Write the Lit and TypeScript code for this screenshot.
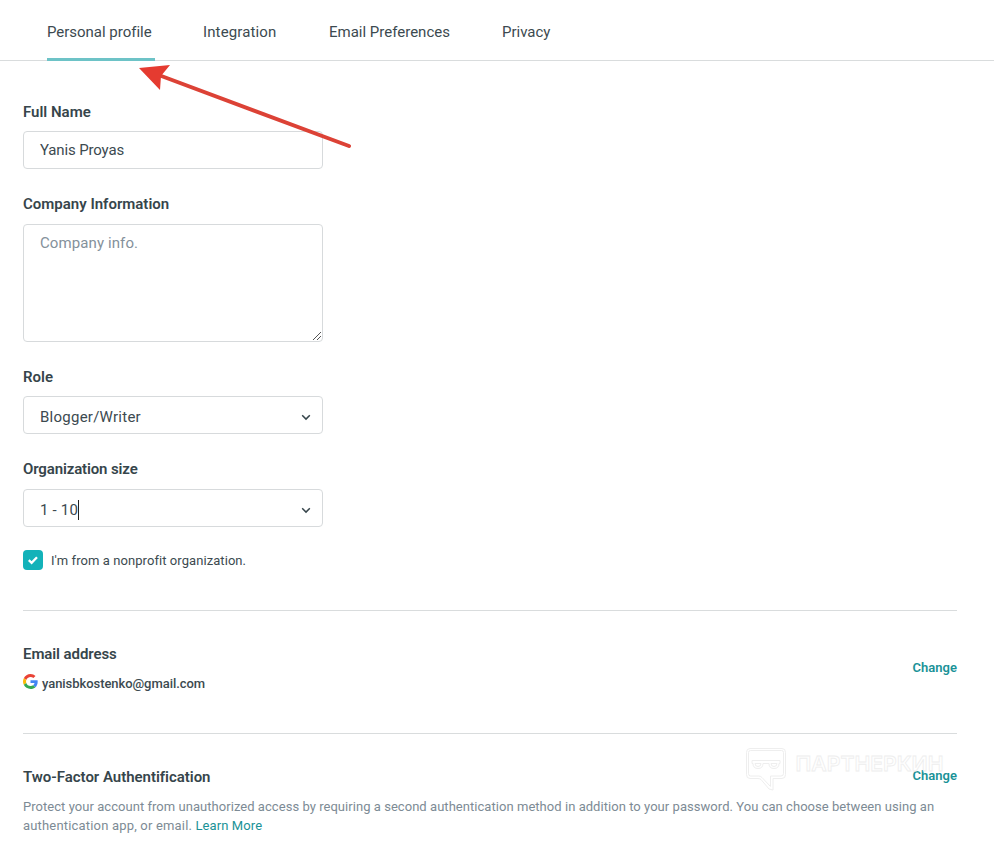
import { LitElement, html, css, svg } from "lit";
import { customElement } from "lit/decorators.js";

const chevron = svg`<path d="M1.2 1.3 5 5.1 8.8 1.3" fill="none" stroke="#36454b" stroke-width="1.5"/>`;

@customElement("app-root")
export class AppRoot extends LitElement {
  static styles = css`
    :host { display: block; position: relative; height: 841px; overflow: hidden; background: #fff; color: #3c4a50; font-family: Roboto, "Liberation Sans", sans-serif; font-size: 15px; }
    * { box-sizing: border-box; }
    .tabs { display: flex; gap: 48px; height: 61px; padding-left: 47px; border-bottom: 1px solid #d9dcdd; }
    .tab { height: 61px; line-height: 64px; white-space: nowrap; border-bottom: 3px solid transparent; }
    .tab.active { border-color: #6dc3c7; }
    .personal { width: 108px; letter-spacing: -0.02px; }
    .integration { width: 78px; letter-spacing: 0.13px; }
    .preferences { width: 125px; }
    .content { width: 957px; padding: 41px 0 0 23px; }
    .field { width: 300px; margin-bottom: 25px; display: flex; flex-direction: column; gap: 9px; }
    .field.loose { gap: 10px; }
    .field.last { margin-bottom: 23px; }
    .label { height: 20px; line-height: 20px; font-weight: 600; white-space: nowrap; color: #36454b; }
    .label.size { letter-spacing: -0.13px; }
    .label.address-title { letter-spacing: -0.08px; }
    .label.two { letter-spacing: -0.03px; }
    .box { height: 38px; border: 1px solid #d7dadc; border-radius: 4px; padding: 0 11px 0 16px; display: flex; align-items: center; white-space: nowrap; }
    .name { letter-spacing: -0.14px; }
    .area { height: 118px; align-items: flex-end; padding: 0 0 0 16px; }
    .hint { align-self: flex-start; flex: 1; line-height: 36px; color: #84919b; letter-spacing: 0.1px; }
    .value { flex: 1; display: flex; align-items: center; }
    .role { letter-spacing: 0.25px; }
    .count { letter-spacing: 0.2px; }
    .select { padding-top: 4px; }
    .caret { width: 1px; height: 20px; background: #222; }
    .check { display: flex; align-items: center; gap: 8px; height: 20px; font-size: 13px; letter-spacing: 0.07px; }
    .tick { width: 20px; height: 20px; border-radius: 4px; background: #13b2b9; }
    .rule { height: 1px; background: #d9dcdd; }
    .check + .rule { margin-top: 40px; }
    .row { display: flex; justify-content: space-between; }
    .email { height: 122px; padding-top: 33px; }
    .mail { display: flex; align-items: center; gap: 4px; height: 20px; margin-top: 9px; font-size: 13px; font-weight: 500; letter-spacing: -0.06px; }
    .google { width: 15px; height: 15px; margin-top: -3px; }
    .change { font-size: 13px; font-weight: 600; line-height: 20px; color: #1a9297; margin-top: 14px; }
    .factor { padding-top: 33px; }
    .factor .change { margin-top: -1px; }
    .text { margin-top: 10px; font-size: 13px; line-height: 19px; color: #7d8b95; white-space: nowrap; }
    .first { letter-spacing: 0.045px; }
    .second { letter-spacing: 0.18px; }
    .link { color: #1a9297; letter-spacing: 0.1px; }
    .overlay { position: absolute; left: 0; top: 0; pointer-events: none; }
    .brand { font: 600 20.5px "Inter", sans-serif; }
  `;

  render() {
    return html`
      <nav class="tabs">
        <div class="tab active personal">Personal profile</div>
        <div class="tab integration">Integration</div>
        <div class="tab preferences">Email Preferences</div>
        <div class="tab privacy">Privacy</div>
      </nav>
      <main class="content">
        <div class="field"><div class="label">Full Name</div><div class="box name">Yanis Proyas</div></div>
        <div class="field loose"><div class="label">Company Information</div><div class="box area"><span class="hint">Company info.</span>
          <svg width="10" height="10" viewBox="0 0 10 10"><path d="M1 9 9 1M5 9 9 5" stroke="#555" stroke-width="1"/></svg></div></div>
        <div class="field"><div class="label">Role</div><div class="box select"><span class="value role">Blogger/Writer</span><svg width="10" height="7">${chevron}</svg></div></div>
        <div class="field loose last"><div class="label size">Organization size</div><div class="box select"><span class="value count">1 - 10<i class="caret"></i></span><svg width="10" height="7">${chevron}</svg></div></div>
        <div class="check"><svg class="tick" viewBox="0 0 20 20"><path d="m5.8 10.2 2.8 2.7 5.4-5.7" fill="none" stroke="#fff" stroke-width="2.3"/></svg><span>I'm from a nonprofit organization.</span></div>
        <div class="rule"></div>
        <section class="row email">
          <div><div class="label address-title">Email address</div>
            <div class="mail"><svg class="google" viewBox="0 0 48 48"><path fill="#EA4335" d="M24 9.5c3.54 0 6.71 1.22 9.21 3.6l6.85-6.85C35.9 2.38 30.47 0 24 0 14.62 0 6.51 5.38 2.56 13.22l7.98 6.19C12.43 13.72 17.74 9.5 24 9.5z"/><path fill="#4285F4" d="M46.98 24.55c0-1.57-.15-3.09-.38-4.55H24v9.02h12.94c-.58 2.96-2.26 5.48-4.78 7.18l7.73 6c4.51-4.18 7.09-10.36 7.09-17.65z"/><path fill="#FBBC05" d="M10.53 28.59c-.48-1.45-.76-2.99-.76-4.59s.27-3.14.76-4.59l-7.98-6.19C.92 16.46 0 20.12 0 24c0 3.88.92 7.54 2.56 10.78l7.97-6.19z"/><path fill="#34A853" d="M24 48c6.48 0 11.93-2.13 15.89-5.81l-7.73-6c-2.15 1.45-4.92 2.3-8.16 2.3-6.26 0-11.57-4.22-13.47-9.91l-7.98 6.19C6.51 42.62 14.62 48 24 48z"/></svg><span>yanisbkostenko@gmail.com</span></div></div>
          <div class="change">Change</div>
        </section>
        <div class="rule"></div>
        <section class="factor">
          <div class="row"><div class="label two">Two-Factor Authentification</div><div class="change">Change</div></div>
          <div class="text"><span class="first">Protect your account from unauthorized access by requiring a second authentication method in addition to your password. You can choose between using an</span><br><span class="second">authentication app, or email. </span><span class="link">Learn More</span></div>
        </section>
      </main>
      <svg class="overlay" width="994" height="841" viewBox="0 0 994 841">
        <path d="M160 75.5 349 146" stroke="#dc4236" stroke-width="4" stroke-linecap="round"/>
        <path d="M139 68 170 65 161 76 160 90Z" fill="#e53b30"/>
        <g fill="none" stroke="#eeeeee" stroke-width="1">
          <path d="M750 748.500h32q3.500 0 3.500 4v22q0 4-3.500 4h-9v11.500l-4-1-8-9.500q-1-1-3-1h-8q-3.500 0-3.500-4v-22q0-4 3.500-4Z"/>
          <path d="M750.500 750.500h31q2 0 2 2v21q0 2.500-2.500 2.500h-10.500v10.500l-8.500-9q-1.500-1.500-3.500-1.500h-8q-2 0-2-2.500v-21q0-2 2-2Z"/>
          <path d="M752 760.500h28v3h-1q0 5-5 5t-5-5h-6q0 5-5 5t-5-5h-1ZM755 763.500h6q0 3-3 3t-3-3ZM771 763.500h6q0 3-3 3t-3-3Z"/>
          <text class="brand" x="795.500" y="770.500" textLength="148" lengthAdjust="spacingAndGlyphs" stroke-width="0.8">ПАРТНЕРКИН</text>
        </g>
      </svg>
    `;
  }
}
